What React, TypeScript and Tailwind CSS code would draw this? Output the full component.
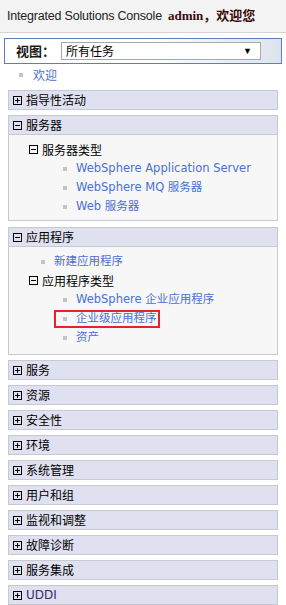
import type { ReactNode } from "react";

const cjk = "font-['Noto_Sans_CJK_SC','Noto_Sans',sans-serif]";
const link = "font-['DejaVu_Sans','Noto_Sans_CJK_SC',sans-serif]";

function Toggle({ open }: { open: boolean }) {
  return (
    <svg width="9" height="9" viewBox="0 0 9 9" className="shrink-0">
      <rect x="0.5" y="0.5" width="8" height="8" fill="none" stroke="#000" />
      <path d="M2 4.5h5" stroke="#000" />
      {!open && <path d="M4.5 2v5" stroke="#000" />}
    </svg>
  );
}

function Bullet() {
  return <span className="inline-block h-[4px] w-[4px] shrink-0 bg-[#c4c4c4]" />;
}

function LinkRow({ children, indent = 54 }: { children: ReactNode; indent?: number }) {
  return (
    <div className="flex h-[19px] items-center" style={{ paddingLeft: indent }}>
      <Bullet />
      <span className={`ml-[9px] text-[11.5px] text-[#4b6fd4] ${link}`}>{children}</span>
    </div>
  );
}

function SectionHead({ label, open = false }: { label: string; open?: boolean }) {
  return (
    <div className="flex h-[18px] items-center gap-[4px] bg-[#dfe0f0] pl-[4px]">
      <Toggle open={open} />
      <span className={`text-[12px] leading-[18px] text-black ${cjk}`}>{label}</span>
    </div>
  );
}

const collapsed = ["服务", "资源", "安全性", "环境", "系统管理", "用户和组", "监视和调整", "故障诊断", "服务集成"];

export default function App() {
  return (
    <div className="h-[605px] w-[286px] overflow-hidden bg-white">
      <header className="flex h-[33px] items-center gap-[6px] border-b border-[#d4d4d4] bg-[#f3f3f3] pl-[7px]">
        <span className="font-['Liberation_Sans',sans-serif] text-[12.5px] tracking-[-0.2px] text-[#222]">
          Integrated Solutions Console
        </span>
        <span className="font-['Liberation_Serif','Noto_Sans_CJK_SC',serif] text-[13px] font-bold text-[#3a0a0a]">
          admin，欢迎您
        </span>
      </header>

      <div className="mx-[4px] mt-[5px] flex h-[26px] items-center border border-[#5d7fb8] bg-gradient-to-r from-white via-white to-[#dde3ee] pl-[11px]">
        <span className={`w-[45px] text-[13px] font-bold text-[#1a1a1a] ${cjk}`}>视图：</span>
        <div className="flex h-[18px] w-[200px] items-center justify-between border border-[#a8a8a8] bg-white pl-[4px] pr-[8px]">
          <span className={`text-[12px] text-black ${cjk}`}>所有任务</span>
          <span className="text-[9px] text-black">▼</span>
        </div>
      </div>

      <div className="flex h-[22px] items-center pl-[19px]">
        <Bullet />
        <span className={`ml-[10px] text-[12px] text-[#4b6fd4] ${cjk}`}>欢迎</span>
      </div>

      <div className="mx-[8px] mt-[4px] flex flex-col gap-[5px]">
        <div className="border border-[#c8c8d0]">
          <SectionHead label="指导性活动" />
        </div>

        <div className="border border-[#c8c8d0]">
          <SectionHead label="服务器" open />
          <div className="border-t border-[#c8c8d0] bg-[#f7f7f7] pb-[4px] pt-[5px]">
            <div className="flex h-[19px] items-center gap-[4px] pl-[20px]">
              <Toggle open />
              <span className={`text-[12px] text-black ${cjk}`}>服务器类型</span>
            </div>
            <LinkRow>WebSphere Application Server</LinkRow>
            <LinkRow>WebSphere MQ 服务器</LinkRow>
            <LinkRow>Web 服务器</LinkRow>
          </div>
        </div>

        <div className="mt-[1px] border border-[#c8c8d0]">
          <SectionHead label="应用程序" open />
          <div className="border-t border-[#c8c8d0] bg-[#f7f7f7] pb-[7px] pt-[5px]">
            <LinkRow indent={32}>新建应用程序</LinkRow>
            <div className="flex h-[19px] items-center gap-[4px] pl-[20px]">
              <Toggle open />
              <span className={`text-[12px] text-black ${cjk}`}>应用程序类型</span>
            </div>
            <LinkRow>WebSphere 企业应用程序</LinkRow>
            <div className="relative">
              <LinkRow>企业级应用程序</LinkRow>
              <span className="absolute left-[45px] top-[1px] h-[18px] w-[106px] border-2 border-[#e8222a]" />
            </div>
            <LinkRow>资产</LinkRow>
          </div>
        </div>

        {collapsed.map((label) => (
          <div key={label} className="border border-[#c8c8d0]">
            <SectionHead label={label} />
          </div>
        ))}

        <div className="border border-[#c8c8d0]">
          <div className="flex h-[18px] items-center gap-[4px] bg-[#dfe0f0] pl-[4px]">
            <Toggle open={false} />
            <span className={`text-[12px] leading-[18px] text-[#3a2a6a] ${link}`}>UDDI</span>
          </div>
        </div>
      </div>
    </div>
  );
}
